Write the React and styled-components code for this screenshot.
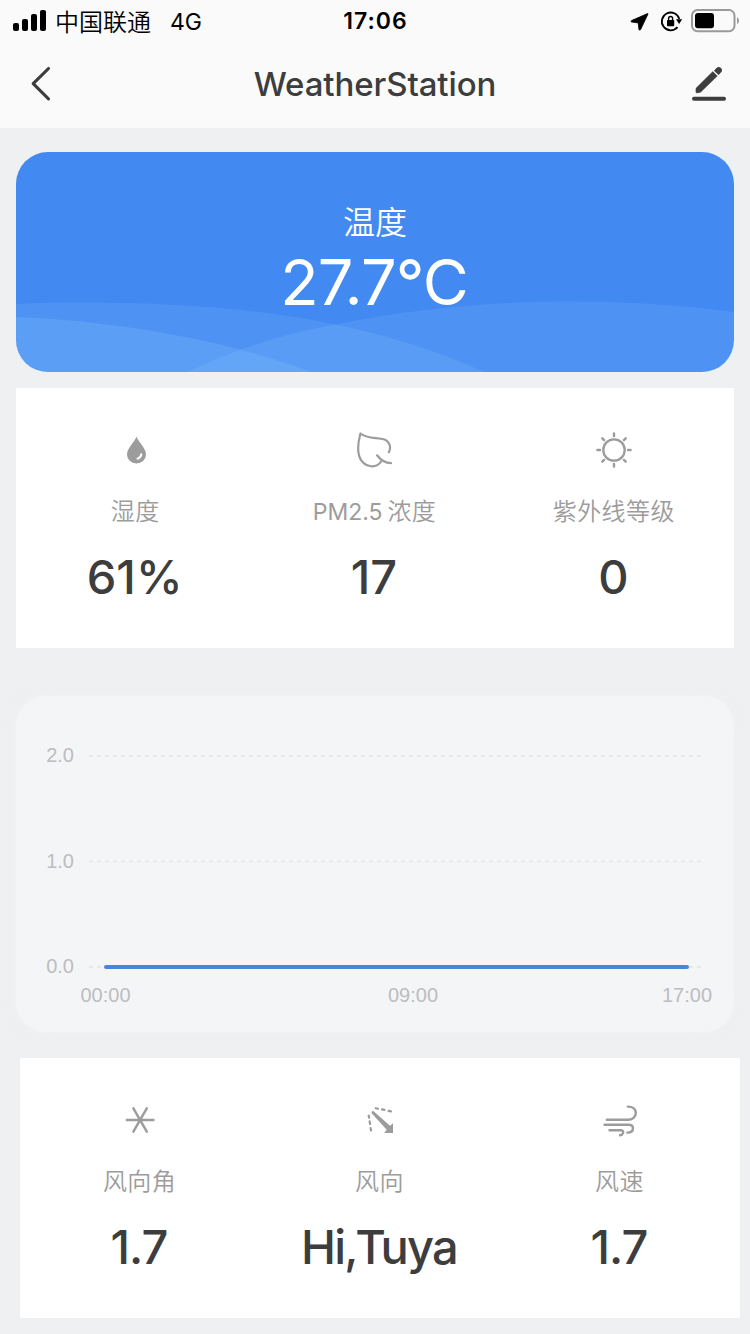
import React from 'react';
import styled, { createGlobalStyle } from 'styled-components';

const Global = createGlobalStyle`
  * { box-sizing: border-box; }
  body {
    margin: 0;
    background: #eef0f2;
    font-family: Inter, "Noto Sans CJK SC", sans-serif;
  }
`;

const Screen = styled.div`
  width: 750px;
  height: 1334px;
  overflow: hidden;
  background: #eef0f2;
`;

const Header = styled.header`
  height: 128px;
  background: #fafafa;
`;

const StatusBar = styled.div`
  display: grid;
  grid-template-columns: 1fr 120px 1fr;
  align-items: center;
  height: 40px;
  padding: 0 10px 0 13px;
  color: #000;
`;

const StatusGroup = styled.div`
  display: flex;
  align-items: center;
  height: 40px;
  justify-content: ${(p) => p.$justify || 'flex-start'};
`;

const Carrier = styled.span`
  margin-left: 8px;
  font-size: 24px;
  font-weight: 350;
  line-height: 40px;
  font-family: "Noto Sans CJK SC", sans-serif;
`;

const Network = styled.span`
  margin: 2px 0 0 19px;
  font-size: 23px;
  line-height: 40px;
`;

const Clock = styled.span`
  padding: 1px 2px 0 0;
  font-size: 23px;
  font-weight: 600;
  line-height: 40px;
  letter-spacing: 1px;
  text-align: center;
`;

const NavBar = styled.nav`
  display: flex;
  align-items: center;
  justify-content: space-between;
  height: 88px;
  padding: 0 20px;
`;

const NavButton = styled.button`
  width: 44px;
  height: 44px;
  padding: 0;
  border: 0;
  background: none;
  color: #3d3d3d;
`;

const Title = styled.h1`
  margin: 0;
  font-size: 33px;
  font-weight: 460;
  line-height: 44px;
  color: #3d3d3d;
  letter-spacing: -0.1px;
`;

const Content = styled.main`
  padding-top: 24px;
`;

const HeroCard = styled.section`
  display: grid;
  height: 220px;
  margin: 0 16px 16px;
  border-radius: 32px;
  overflow: hidden;
  background: #4289f1;
  color: #fff;
  > * { grid-area: 1 / 1; }
`;

const HeroText = styled.div`
  display: flex;
  flex-direction: column;
  align-items: center;
  padding-top: 48px;
`;

const HeroLabel = styled.div`
  font-size: 32px;
  font-weight: 350;
  line-height: 46px;
`;

const HeroValue = styled.div`
  margin-top: -2px;
  padding-right: 2px;
  font-size: 63px;
  line-height: 76px;
  letter-spacing: -0.9px;
`;

const MetricCard = styled.section`
  display: grid;
  grid-template-columns: repeat(3, 1fr);
  height: 260px;
  margin: ${(p) => p.$margin};
  padding-top: 42px;
  background: #fff;
`;

const Metric = styled.div`
  display: flex;
  flex-direction: column;
  align-items: center;
`;

const MetricIcon = styled.svg`
  width: 40px;
  height: 40px;
  color: #9c9c9c;
`;

const MetricLabel = styled.div`
  margin-top: 24px;
  padding-right: 1px;
  font-size: 24px;
  font-weight: 350;
  line-height: 36px;
  letter-spacing: 0.4px;
  color: #9c9c9c;
  white-space: nowrap;
`;

const LatinText = styled.span`
  margin-right: 5px;
  font-size: 23px;
  font-weight: 400;
  letter-spacing: 0;
`;

const MetricValue = styled.div`
  margin-top: 17px;
  padding-right: 2px;
  font-size: 47px;
  font-weight: 500;
  line-height: 60px;
  letter-spacing: ${(p) => p.$spacing || '0'};
  color: #3d3d3d;
  white-space: nowrap;
`;

const ChartCard = styled.section`
  height: 336px;
  margin: 48px 16px 26px;
  border-radius: 30px;
  background: #f4f5f7;
  box-shadow: 0 0 12px rgba(244, 245, 247, 0.5);
`;

const AxisText = styled.text`
  font-family: "Liberation Sans", Arial, sans-serif;
  font-size: 20px;
  fill: #bcbdc0;
`;

const stroke = {
  fill: 'none',
  stroke: 'currentColor',
  strokeLinecap: 'round',
  strokeLinejoin: 'round',
};

const icons = {
  drop: (
    <>
      <path d="M20.500 6.800C18 12.800 11 18.300 11 24.500a9.500 9 0 0 0 19 0C30 18.300 23 12.800 20.500 6.800Z" fill="currentColor" />
      <path d="M25.300 24.200c-.2 2.400-1.600 4-3.800 4.500" {...stroke} stroke="#fff" strokeWidth="2" />
    </>
  ),
  leaf: (
    <path
      d="M33.800 22.200C36.300 18 35 11.500 29.500 9.500C22 7.300 12 9 5.400 3.500C3 12.500 1 23 6.500 30.700C10.700 36.700 21 39.300 26 31.500M22 25.300C25.500 29.800 30 33 36 33.200"
      {...stroke}
      strokeWidth="2.200"
    />
  ),
  sun: (
    <>
      <circle cx="20" cy="20" r="10.700" {...stroke} strokeWidth="2.300" />
      <path
        d="M20 3.400v2.600M20 34v2.600M3.400 20h2.600M34 20h2.600M8.300 8.300l1.800 1.800M29.900 29.900l1.800 1.800M8.300 31.700l1.800-1.800M29.900 10.100l1.800-1.800"
        {...stroke}
        strokeWidth="2.400"
      />
    </>
  ),
  angle: <path d="M6.800 20h26.700M13.400 8.300l13.400 23.400M26.800 8.300L13.400 31.700" {...stroke} strokeWidth="2.400" />,
  direction: (
    <>
      <path d="M11.400 12.900Q11.200 11 13.300 11L30 25.800L33 23.200V33H24.200L26.700 29.800Z" fill="currentColor" />
      <path
        d="M15.800 8.200l2.200.5M22 9.400l2.400.5M28.500 10.900l2.500.5M8.700 15.500l.5 2.200M9.600 21.400l.5 2.600M10.600 28l.5 2.500"
        {...stroke}
        strokeWidth="2.200"
      />
    </>
  ),
  wind: (
    <path
      d="M6.800 19.700H28c4.500 0 7.800-2.800 7.800-6.700 0-4-3.200-6.400-8-6.400M4.500 24.800h24c3 0 4.500 1.300 4.500 3.500 0 2.700-2 4.300-5.700 4.300M9.500 30.300h11c2.300 0 3.200 1 2.500 2.800-.5 1.400-1.500 2-3 2.200"
      {...stroke}
      strokeWidth="2.400"
    />
  ),
};

const outdoor = [
  { icon: 'drop', label: '湿度', value: '61%' },
  { icon: 'leaf', latin: 'PM2.5', label: '浓度', value: '17' },
  { icon: 'sun', label: '紫外线等级', value: '0' },
];

const wind = [
  { icon: 'angle', label: '风向角', value: '1.7', spacing: '-0.9px' },
  { icon: 'direction', label: '风向', value: 'Hi,Tuya', spacing: '-1.8px' },
  { icon: 'wind', label: '风速', value: '1.7', spacing: '-0.9px' },
];

function Metrics({ items, margin }) {
  return (
    <MetricCard $margin={margin}>
      {items.map((m) => (
        <Metric key={m.label}>
          <MetricIcon viewBox="0 0 40 40">{icons[m.icon]}</MetricIcon>
          <MetricLabel>
            {m.latin && <LatinText>{m.latin}</LatinText>}
            {m.label}
          </MetricLabel>
          <MetricValue $spacing={m.spacing}>{m.value}</MetricValue>
        </Metric>
      ))}
    </MetricCard>
  );
}

function Waves() {
  return (
    <svg width="718" height="220" viewBox="0 0 718 220" fill="#8cc8ff" fillOpacity=".17">
      <path d="M0 152C120 147 245 156 317 172C370 183 420 198 468 220H0Z" />
      <path d="M0 165C100 169 205 187 296 220H0Z" fillOpacity=".22" />
      <path d="M172 220C215 199 265 182 317 173C445 146 590 143 718 160V220Z" />
    </svg>
  );
}

function Chart() {
  const rows = [
    { y: 60, label: '2.0' },
    { y: 165.500, label: '1.0' },
    { y: 271, label: '0.0' },
  ];
  const hours = [
    { x: 89.500, label: '00:00' },
    { x: 397, label: '09:00' },
    { x: 671, label: '17:00' },
  ];
  return (
    <ChartCard>
      <svg width="718" height="336" viewBox="0 0 718 336">
        {rows.map((r) => (
          <g key={r.label}>
            <AxisText x="58" y={r.y + 6} textAnchor="end">{r.label}</AxisText>
            <path d={`M73 ${r.y}H688`} stroke="#e5e7e9" strokeWidth="2" strokeDasharray="4 4" />
          </g>
        ))}
        <path d="M90 271H671" stroke="#4686df" strokeWidth="4" strokeLinecap="round" />
        {hours.map((h) => (
          <AxisText key={h.label} x={h.x} y="306" textAnchor="middle">{h.label}</AxisText>
        ))}
      </svg>
    </ChartCard>
  );
}

export default function App() {
  return (
    <Screen>
      <Global />
      <Header>
        <StatusBar>
          <StatusGroup>
            <svg width="34" height="22" viewBox="0 0 34 22">
              <rect x="0" y="13" width="6" height="8" rx="2" />
              <rect x="9" y="9" width="6" height="12" rx="2" />
              <rect x="18" y="4" width="6" height="17" rx="2" />
              <rect x="27" y="0" width="6" height="21" rx="2" />
            </svg>
            <Carrier>中国联通</Carrier>
            <Network>4G</Network>
          </StatusGroup>
          <Clock>17:06</Clock>
          <StatusGroup $justify="flex-end">
            <svg width="110" height="40" viewBox="630 0 110 40">
              <path d="M647.500 12.600L631.500 19.600Q630.200 20.600 631.800 21.100L638.200 21.900L638.900 28.300Q639.500 30 640.600 28.600L647.900 13.200Q648.100 12.300 647.500 12.600Z" stroke="#000" strokeWidth=".8" strokeLinejoin="round" />
              <path d="M677.500 26.200A8.900 8.900 0 1 1 679.300 18" fill="none" stroke="#000" strokeWidth="1.800" />
              <path d="M676 18.200h6.200l-3.100 4.800Z" />
              <rect x="667" y="19" width="7.200" height="6.200" rx=".8" />
              <path d="M668.600 19v-1.500a2 2 0 0 1 4 0V19" fill="none" stroke="#000" strokeWidth="1.400" />
              <rect x="692" y="9" width="42.500" height="21.200" rx="5.500" fill="none" stroke="#999" strokeWidth="2" />
              <rect x="695" y="12" width="19" height="15.200" rx="3" />
              <path d="M737 16q2 1.200 2 3.500t-2 3.500Z" fill="#999" />
            </svg>
          </StatusGroup>
        </StatusBar>
        <NavBar>
          <NavButton aria-label="返回">
            <svg width="44" height="44" viewBox="20 62 44 44">
              <path d="M48.500 68.500L33.200 83.700L48.500 98.800" {...stroke} strokeWidth="3.100" />
            </svg>
          </NavButton>
          <Title>WeatherStation</Title>
          <NavButton aria-label="编辑">
            <svg width="44" height="44" viewBox="686 62 44 44">
              <path d="M694 98.700H724" {...stroke} strokeWidth="4" />
              <path d="M696 88.200L712.800 71.600L717.300 76L700.500 92.300L697 92.900Q695.700 92.900 695.900 91.500Z" fill="currentColor" stroke="currentColor" strokeWidth=".5" />
              <path d="M714 70.700L716.200 68.300Q718.700 65.700 721 67.900Q723.200 70.200 720.900 72.500L718.600 74.900Z" fill="currentColor" />
            </svg>
          </NavButton>
        </NavBar>
      </Header>
      <Content>
        <HeroCard>
          <Waves />
          <HeroText>
            <HeroLabel>温度</HeroLabel>
            <HeroValue>27.7°C</HeroValue>
          </HeroText>
        </HeroCard>
        <Metrics items={outdoor} margin="0 16px" />
        <Chart />
        <Metrics items={wind} margin="0 10px 0 20px" />
      </Content>
    </Screen>
  );
}
